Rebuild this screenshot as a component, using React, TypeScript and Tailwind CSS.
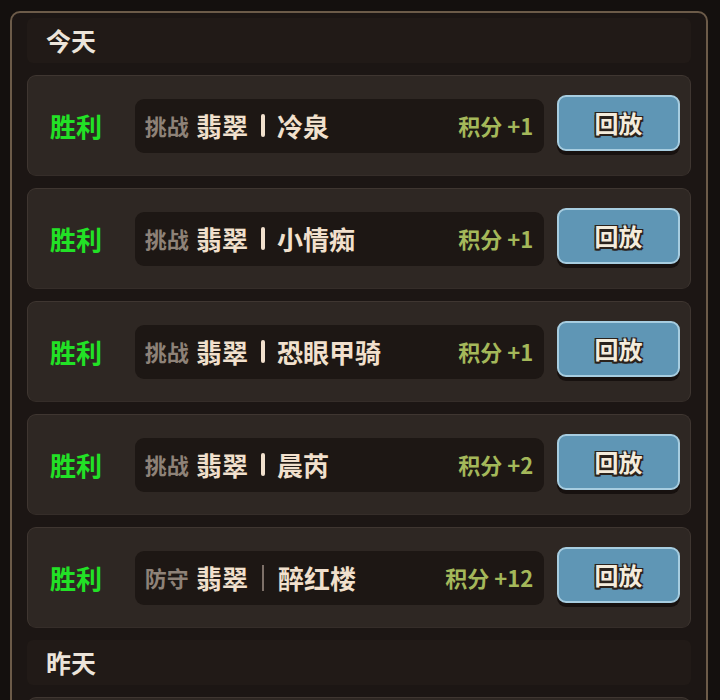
import React from 'react';

interface Match {
  mode: string;
  opponent: string;
  score: number;
  thinBar?: boolean;
}

const today: Match[] = [
  { mode: '挑战', opponent: '冷泉', score: 1 },
  { mode: '挑战', opponent: '小情痴', score: 1 },
  { mode: '挑战', opponent: '恐眼甲骑', score: 1 },
  { mode: '挑战', opponent: '晨芮', score: 2 },
  { mode: '防守', opponent: '醉红楼', score: 12, thinBar: true },
];

function SectionHeader({ title }: { title: string }) {
  return (
    <div className="flex h-[45px] items-center rounded-md bg-[#211a17] pl-[19px]">
      <span className="text-[25px] font-bold text-[#ece4da]">{title}</span>
    </div>
  );
}

const cardClass =
  'flex h-[101px] shrink-0 items-center rounded-[9px] border border-[#3f3631] border-b-[#352d29] bg-[#2e2723] pr-[10px]';

function MatchRow({ match }: { match: Match }) {
  return (
    <div className={cardClass}>
      <div className="w-[107px] pl-[22px] text-[26px] font-bold text-[#22e126]">胜利</div>

      {/* result summary */}
      <div className="flex h-[54px] w-[410px] items-center rounded-[9px] bg-[#1d1714] pl-[10px] pr-[11px]">
        <span className="text-[22px] font-bold text-[#8e8278]">{match.mode}</span>
        <span className="ml-[7px] text-[26px] font-bold text-[#f1e0cd]">翡翠</span>
        {match.thinBar ? (
          <span className="mx-[14px] h-[26px] w-[2px] bg-[#7d7068]" />
        ) : (
          <span className="ml-[13px] mr-[12px] h-[23px] w-[4px] rounded-sm bg-[#f1e0cd]" />
        )}
        <span className="text-[26px] font-bold text-[#f1e0cd]">{match.opponent}</span>
        <span className="ml-auto text-[22px] font-bold text-[#a4b85a]">积分 +{match.score}</span>
      </div>

      <button className="ml-[13px] mb-[5px] flex h-[56px] w-[123px] items-center justify-center rounded-[9px] border-2 border-[#a7cde0] bg-[#5f96b5] shadow-[0_4px_0_#17110f]">
        <span className="text-[24px] font-bold text-[#f4ecdc] [text-shadow:-1.5px_-1.5px_0_#2a221c,1.5px_-1.5px_0_#2a221c,-1.5px_1.5px_0_#2a221c,1.5px_1.5px_0_#2a221c,0_2px_0_#2a221c]">
          回放
        </span>
      </button>
    </div>
  );
}

export default function App() {
  return (
    <div
      className="h-[700px] w-[720px] overflow-hidden bg-[#14100e] pl-[10px] pr-[12px] pt-[11px]"
      style={{ fontFamily: '"Noto Sans CJK SC", "Noto Sans", sans-serif' }}
    >
      <div className="flex flex-col gap-[12px] rounded-[10px] border-2 border-[#6c5b49] bg-[#1c1614] px-[15px] pt-[5px] pb-6">
        <SectionHeader title="今天" />
        {today.map((m, i) => (
          <MatchRow key={i} match={m} />
        ))}
        <SectionHeader title="昨天" />
        {/* first row of yesterday, only its top edge is in view */}
        <div className={cardClass} />
      </div>
    </div>
  );
}
